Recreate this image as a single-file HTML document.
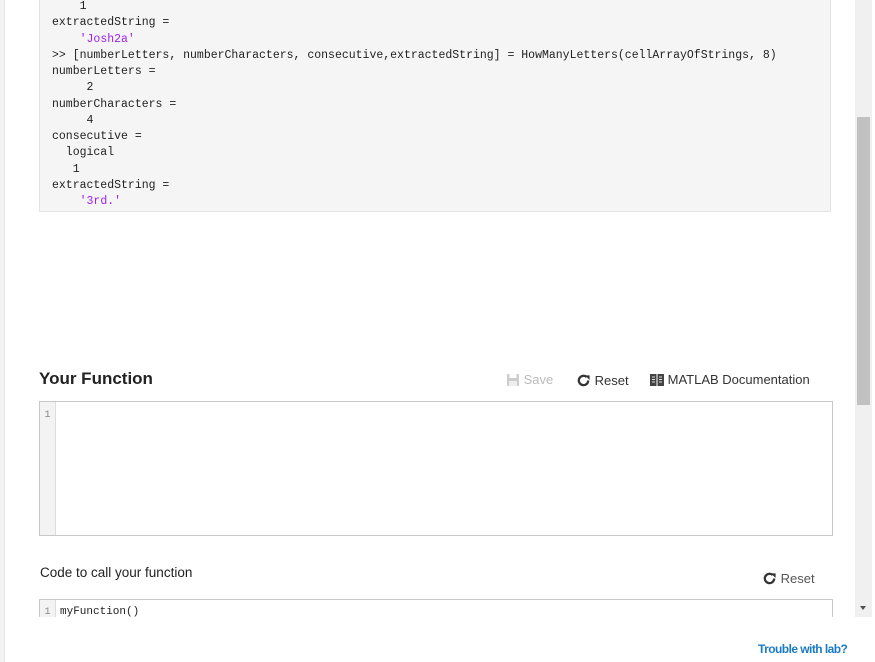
<!DOCTYPE html>
<html><head><meta charset="utf-8"><style>
*{margin:0;padding:0;box-sizing:border-box}
body{width:875px;height:662px;overflow:hidden;background:#fff;font-family:"Liberation Sans",sans-serif;position:relative;color:#333}
.lstrip{position:absolute;left:0;top:0;width:5px;height:662px;background:#f3f3f3;border-right:1px solid #e6e6e6}
.vp{position:absolute;left:6px;top:0;width:849px;height:617px;overflow:hidden}
.code{position:absolute;left:33px;top:-10px;width:792px;height:222px;background:#f5f5f5;border:1px solid #e3e3e3}
pre{position:absolute;left:12px;top:8px;font-family:"Liberation Mono",monospace;font-size:11.5px;line-height:16.25px;color:#222}
.s{color:#a020f0}
.sb{position:absolute;left:855px;top:0;width:17px;height:617px;background:#f0f0f0}
.th{position:absolute;left:2px;top:117px;width:13px;height:288px;background:#c1c1c1}
.arr{position:absolute;left:5px;top:606px;width:0;height:0;border-left:3.5px solid transparent;border-right:3.5px solid transparent;border-top:4px solid #505050}
h2{position:absolute;left:33px;top:369px;font-size:17px;font-weight:bold;color:#222}
.tb{position:absolute;top:372px;font-size:13px;color:#333;display:flex;align-items:center}
.ed{position:absolute;left:33px;border:1px solid #c8c8c8;background:#fff}
.gut{position:absolute;left:0;top:0;bottom:0;width:16px;background:#f3f3f3;border-right:1px solid #ddd;font-family:"Liberation Mono",monospace;font-size:10px;color:#888;text-align:center;padding-top:8px}
.lbl{position:absolute;left:34px;top:565px;font-size:13.5px;color:#222}
.tr{position:absolute;left:758px;top:642px;font-size:12px;font-weight:bold;color:#1a7bc4;letter-spacing:-0.55px}
</style></head><body>
<div class="lstrip"></div>
<div class="vp">
<div class="code"><pre>    1
extractedString =
    <span class="s">'Josh2a'</span>
&gt;&gt; [numberLetters, numberCharacters, consecutive,extractedString] = HowManyLetters(cellArrayOfStrings, 8)
numberLetters =
     2
numberCharacters =
     4
consecutive =
  logical
   1
extractedString =
    <span class="s">'3rd.'</span></pre></div>
<h2>Your Function</h2>
<div class="tb" style="left:500px;color:#bbb"><svg width="14" height="14" viewBox="0 0 14 14"><rect x="1" y="1" width="12" height="12" rx="1" fill="#ccc"/><rect x="3.5" y="1" width="7" height="4" fill="#fff"/><rect x="3" y="8" width="8" height="5" fill="#eee"/></svg>&nbsp;Save</div>
<div class="tb" style="left:570px;top:373px"><svg width="15" height="15" viewBox="0 0 16 16"><path d="M13 8a5 5 0 1 1-1.6-3.7" fill="none" stroke="#333" stroke-width="2.4"/><path d="M9.5 2.5h5v5z" fill="#333"/></svg>&nbsp;Reset</div>
<div class="tb" style="left:644px"><svg width="14" height="12" viewBox="0 0 14 12"><rect x="0" y="0" width="14" height="12" fill="#444"/><rect x="6.5" y="0" width="1" height="12" fill="#fff"/><path d="M2 3h3M2 5.5h3M2 8h3M9 3h3M9 5.5h3M9 8h3" stroke="#ddd" stroke-width="1"/></svg>&nbsp;MATLAB Documentation</div>
<div class="ed" style="top:401px;width:794px;height:135px"><div class="gut">1</div></div>
<div class="lbl">Code to call your function</div>
<div class="tb" style="left:756px;top:571px;color:#555"><svg width="15" height="15" viewBox="0 0 16 16"><path d="M13 8a5 5 0 1 1-1.6-3.7" fill="none" stroke="#333" stroke-width="2.4"/><path d="M9.5 2.5h5v5z" fill="#333"/></svg>&nbsp;Reset</div>
<div class="ed" style="top:599px;width:794px;height:40px"><div class="gut" style="padding-top:7px">1</div><div style="position:absolute;left:20px;top:6px;font-family:'Liberation Mono',monospace;font-size:11px;color:#222">myFunction()</div></div>
</div>
<div class="sb"><div class="th"></div><div class="arr"></div></div>
<div class="tr">Trouble with lab?</div>
</body></html>
